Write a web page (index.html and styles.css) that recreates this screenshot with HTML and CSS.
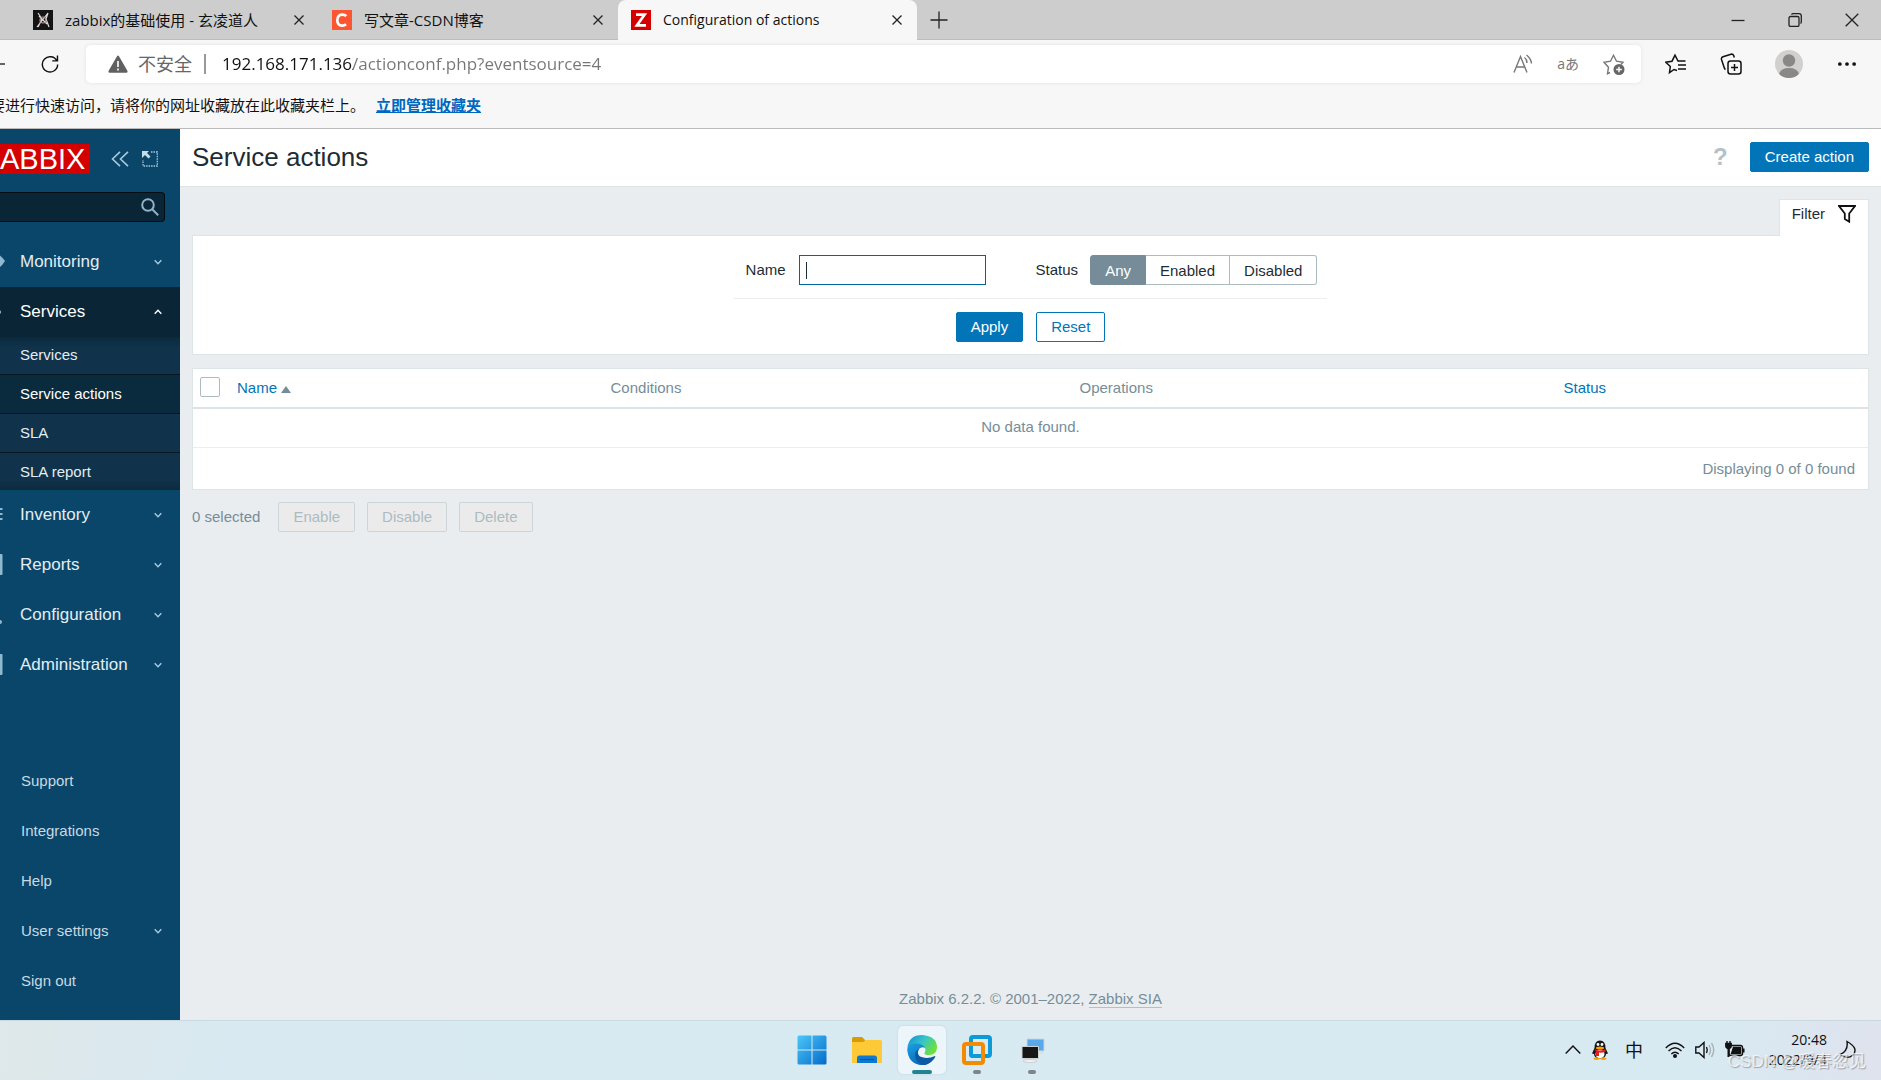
FILE: index.html
```html
<!DOCTYPE html>
<html lang="zh-CN">
<head>
<meta charset="utf-8">
<meta name="viewport" content="width=device-width, initial-scale=1">
<title>Configuration of actions</title>
<link rel="stylesheet" href="styles.css">
</head>
<body>
<div class="screen">
  <header class="browser">
    <div class="tab-strip">
      <div class="tab">
        <svg class="favicon" viewBox="0 0 20 20"><rect width="20" height="20" fill="#141414"/><path d="M5 3l4 6-4 8M15 3l-2 6 3 8M4 17L15 3M6 6l8 8" stroke="#ddd" stroke-width="1.200" fill="none"/><circle cx="10" cy="10" r="3" fill="none" stroke="#b99" stroke-width="1.200"/></svg>
        <span class="tab-title">zabbix的基础使用 - 玄凌道人</span>
        <button class="tab-close" aria-label="Close tab"><svg viewBox="0 0 12 12"><path d="M1.500 1.500l9 9M10.500 1.500l-9 9"/></svg></button>
      </div>
      <div class="tab">
        <svg class="favicon" viewBox="0 0 20 20"><rect width="20" height="20" fill="#fc5531"/><path d="M14.300 6.200Q12.800 4.500 10 4.600Q5.500 5 5.300 10Q5.300 15.500 10 15.600Q12.500 15.700 14 14.300" stroke="#fff" stroke-width="2.600" fill="none"/></svg>
        <span class="tab-title">写文章-CSDN博客</span>
        <button class="tab-close" aria-label="Close tab"><svg viewBox="0 0 12 12"><path d="M1.500 1.500l9 9M10.500 1.500l-9 9"/></svg></button>
      </div>
      <div class="tab tab-active">
        <svg class="favicon" viewBox="0 0 20 20"><rect width="20" height="20" fill="#d40000"/><path d="M5 4.700h8.500L6 15.300h9" stroke="#fff" stroke-width="2.800" fill="none"/></svg>
        <span class="tab-title">Configuration of actions</span>
        <button class="tab-close" aria-label="Close tab"><svg viewBox="0 0 12 12"><path d="M1.500 1.500l9 9M10.500 1.500l-9 9"/></svg></button>
      </div>
      <button class="new-tab" aria-label="New tab"><svg viewBox="0 0 18 18"><path d="M9 .5v17M.5 9h17"/></svg></button>
      <div class="window-controls">
        <button aria-label="Minimize"><svg viewBox="0 0 14 14"><path d="M.5 7.500h13"/></svg></button>
        <button aria-label="Restore"><svg viewBox="0 0 14 14"><rect x="1" y="3.500" width="10" height="10" rx="1.500"/><path d="M3.500 1.500Q4 .7 5 .7h6q2.300 0 2.300 2.300v6q0 1-.8 1.500"/></svg></button>
        <button aria-label="Close"><svg viewBox="0 0 14 14"><path d="M.7.7l12.600 12.600M13.300.7L.7 13.300"/></svg></button>
      </div>
    </div>
    <div class="toolbar">
      <button class="back" aria-label="Back"><svg viewBox="0 0 6 12"><path d="M0 6h5" stroke="#333" stroke-width="1.500"/></svg></button>
      <button class="reload" aria-label="Reload"><svg viewBox="0 0 20 22"><path d="M17.800 8A8.500 8.500 0 1 0 18.500 11.500M18.300 1.500V7.500H12.500" fill="none" stroke="#111" stroke-width="1.600"/></svg></button>
      <div class="address">
        <svg class="warn" viewBox="0 0 20 18"><path d="M10 .5Q10.600.5 11 1.200L19.500 16Q20 17.500 18.500 17.800H1.500Q0 17.500.5 16L9 1.200Q9.400.5 10 .5z" fill="#606060"/><path d="M10 6v6M10 13.500v2" stroke="#fff" stroke-width="1.600"/></svg>
        <label class="insecure" for="url">不安全</label>
        <input class="url" id="url" type="text" value="192.168.171.136/actionconf.php?eventsource=4">
        <div class="address-tools">
          <button aria-label="Read aloud"><svg viewBox="0 0 20 20"><path d="M1 18.500L7.500 2.500 14 18.500M3.500 13h8M11.500 3.500Q14 5.500 14 9M13.500 1Q18 4.500 18.500 9.500"/></svg></button>
          <button class="translate" aria-label="Translate">aあ</button>
          <button aria-label="Add favorite"><svg class="fav-add" viewBox="0 0 22 21"><path d="M7 18.500L4.500 19.700 5.500 13.200 1 8.200 7.500 7.200 10.500 1.300 13.500 7.200 20 8.200 18 10.500"/><circle cx="16" cy="15.500" r="5.500" fill="#666" stroke="none"/><path d="M16 12.700v5.600M13.200 15.500h5.600" stroke="#fff"/></svg></button>
        </div>
      </div>
      <div class="browser-tools">
        <button aria-label="Favorites"><svg viewBox="0 0 22 20"><path d="M12 16.500L9 15.500 4.500 18.700 5.300 12.500.800 8.200 7 7.200 10 1.200 13 7h7.500M13 11h8M13 15h8"/></svg></button>
        <button aria-label="Collections"><svg viewBox="0 0 22 22"><rect x="8" y="8" width="13" height="13" rx="2.500"/><path d="M14.500 11v7M11 14.500h7M5.500 16.500Q4.500 16 4 14L1.500 6.500Q1 4.500 3 3.700L11 1.200Q13 .8 13.700 2.500L14.300 4.500"/></svg></button>
        <button aria-label="Profile"><svg class="avatar" viewBox="0 0 28 28"><circle cx="14" cy="14" r="14" fill="#d2d0ce"/><circle cx="14" cy="10.500" r="6.200" fill="#8a8886"/><path d="M4 23.700Q6 18 14 18T24 23.700Q20 28 14 28T4 23.700z" fill="#8a8886"/></svg></button>
        <button aria-label="More"><svg viewBox="0 0 18 20"><g fill="#111" stroke="none"><circle cx="2.500" cy="10" r="1.700"/><circle cx="9" cy="10" r="1.700"/><circle cx="15.500" cy="10" r="1.700"/></g></svg></button>
      </div>
    </div>
    <div class="favorites"><span>要进行快速访问，请将你的网址收藏放在此收藏夹栏上。</span><a href="#favorites">立即管理收藏夹</a></div>
  </header>

  <div class="app">
    <aside class="sidebar">
      <div class="brand">
        <a class="logo" href="#home">ABBIX</a>
        <button aria-label="Collapse sidebar"><svg viewBox="0 0 18 16"><path d="M9 .8L1.500 8 9 15.200M17 .8L9.500 8 17 15.200" fill="none" stroke="#a9cadb" stroke-width="1.600"/></svg></button>
        <button aria-label="Hide sidebar"><svg viewBox="0 0 16 16"><path d="M9 1h6.300v14H1V9" fill="none" stroke="#a9cadb" stroke-width="1.300" stroke-dasharray="1.500 1"/><path d="M0 0h7L5 2l3.500 3.500-2 2L3 4 0 7z" fill="#c6dde8"/></svg></button>
      </div>
      <form class="search">
        <input type="text" aria-label="Search">
        <button type="button" aria-label="Search"><svg viewBox="0 0 18 18"><circle cx="7" cy="7" r="5.800"/><path d="M11.200 11.200l6 6"/></svg></button>
      </form>
      <nav class="menu">
        <a class="item" href="#monitoring"><svg class="edge" viewBox="0 0 5 22"><path d="M0 4.500q2.500 2 5 5.500-2.500 4-5 6z"/></svg><span>Monitoring</span><svg class="chev" viewBox="0 0 8 8"><path d="M.7 2.200L4 5.700 7.300 2.200"/></svg></a>
        <a class="item open" href="#services"><svg class="edge" viewBox="0 0 5 22"><circle cx="-1" cy="11" r="2"/></svg><span>Services</span><svg class="chev" viewBox="0 0 8 8"><path d="M.7 5.700L4 2.200 7.300 5.700"/></svg></a>
        <div class="submenu">
          <a href="#services-list">Services</a>
          <a class="current" href="#service-actions">Service actions</a>
          <a href="#sla">SLA</a>
          <a href="#sla-report">SLA report</a>
        </div>
        <a class="item" href="#inventory"><svg class="edge" viewBox="0 0 5 22"><path d="M0 4h2.500v2H0zM0 9h2.500v2H0zM0 14h2.500v2H0z"/></svg><span>Inventory</span><svg class="chev" viewBox="0 0 8 8"><path d="M.7 2.200L4 5.700 7.300 2.200"/></svg></a>
        <a class="item" href="#reports"><svg class="edge" viewBox="0 0 5 22"><rect x="-3" width="5.500" height="21" rx="1"/></svg><span>Reports</span><svg class="chev" viewBox="0 0 8 8"><path d="M.7 2.200L4 5.700 7.300 2.200"/></svg></a>
        <a class="item" href="#configuration"><svg class="edge" viewBox="0 0 5 22"><circle cx="0" cy="18" r="2"/></svg><span>Configuration</span><svg class="chev" viewBox="0 0 8 8"><path d="M.7 2.200L4 5.700 7.300 2.200"/></svg></a>
        <a class="item" href="#administration"><svg class="edge" viewBox="0 0 5 22"><rect x="-3" width="5.500" height="21" rx="1"/></svg><span>Administration</span><svg class="chev" viewBox="0 0 8 8"><path d="M.7 2.200L4 5.700 7.300 2.200"/></svg></a>
      </nav>
      <nav class="menu menu-user">
        <a class="item" href="#support"><span>Support</span></a>
        <a class="item" href="#integrations"><span>Integrations</span></a>
        <a class="item" href="#help"><span>Help</span></a>
        <a class="item" href="#user"><span>User settings</span><svg class="chev" viewBox="0 0 8 8"><path d="M.7 2.200L4 5.700 7.300 2.200"/></svg></a>
        <a class="item" href="#signout"><span>Sign out</span></a>
      </nav>
    </aside>

    <div class="page">
      <header class="page-head">
        <h1>Service actions</h1>
        <a class="help" href="#docs">?</a>
        <button class="btn btn-primary">Create action</button>
      </header>
      <main>
        <div class="filter-tabs"><button class="filter-tab">Filter<svg viewBox="0 0 18 18"><path d="M1 1h16L11.200 8.500V16.700L6.800 14V8.500z" fill="none" stroke="#111" stroke-width="1.800"/></svg></button></div>
        <form class="filter">
          <div class="filter-fields">
            <label for="name">Name</label>
            <input class="text" id="name" type="text">
            <fieldset class="status">
              <legend class="sr">Status</legend>
              <span class="status-label" aria-hidden="true">Status</span>
              <div class="segments">
                <input class="sr" type="radio" name="status" id="any" checked><label for="any">Any</label>
                <input class="sr" type="radio" name="status" id="enabled"><label for="enabled">Enabled</label>
                <input class="sr" type="radio" name="status" id="disabled"><label for="disabled">Disabled</label>
              </div>
            </fieldset>
          </div>
          <div class="filter-buttons">
            <button class="btn btn-primary" type="button">Apply</button>
            <button class="btn" type="button">Reset</button>
          </div>
        </form>
        <table class="list">
          <colgroup><col class="c-check"><col class="c-name"><col class="c-cond"><col class="c-oper"><col></colgroup>
          <thead><tr>
            <th class="check"><input type="checkbox" aria-label="Select all"></th>
            <th><a href="#sort-name">Name<span class="arrow"></span></a></th>
            <th>Conditions</th>
            <th>Operations</th>
            <th><a href="#sort-status">Status</a></th>
          </tr></thead>
          <tbody>
            <tr><td class="empty" colspan="5">No data found.</td></tr>
            <tr><td class="stats" colspan="5">Displaying 0 of 0 found</td></tr>
          </tbody>
        </table>
        <div class="bulk">
          <span>0 selected</span>
          <button class="btn" disabled>Enable</button>
          <button class="btn" disabled>Disable</button>
          <button class="btn" disabled>Delete</button>
        </div>
      </main>
      <footer class="page-foot">Zabbix 6.2.2. © 2001–2022, <a href="#zabbix">Zabbix SIA</a></footer>
    </div>
  </div>

  <footer class="taskbar">
    <div class="apps">
      <button aria-label="Start"><svg viewBox="0 0 30 30"><defs><linearGradient id="win" gradientUnits="userSpaceOnUse" x1="0" y1="0" x2="30" y2="30"><stop offset="0" stop-color="#4cc9fb"/><stop offset="1" stop-color="#0369c8"/></linearGradient></defs><path d="M2 .5H14.500V14.500H.5V2Q.5.5 2 .5zM15.500.5H28Q29.500.5 29.500 2V14.500H15.500zM.5 15.500H14.500V29.500H2Q.5 29.500.5 28zM15.500 15.500H29.500V28Q29.500 29.500 28 29.500H15.500z" fill="url(#win)"/></svg></button>
      <button aria-label="File Explorer"><svg viewBox="0 0 30 30"><path d="M0 8V3.500Q0 2 1.500 2H10l3 3v4H0z" fill="#d99a05"/><path d="M0 7H11l3-2H28.500Q30 5 30 6.500V28H0z" fill="#fdc936"/><path d="M5 28V23Q5 20.500 7.500 20.500H22.500Q25 20.500 25 23V28z" fill="#0f78d0"/><path d="M8 24.500H22" stroke="#075399"/></svg></button>
      <button class="active" aria-label="Edge"><svg viewBox="0 0 30 30"><defs><linearGradient id="e1" x1="0" y1="0" x2="1" y2=".5"><stop offset="0" stop-color="#1688d4"/><stop offset=".55" stop-color="#36c5c9"/><stop offset="1" stop-color="#6ce03c"/></linearGradient><linearGradient id="e2" x1="0" y1="0" x2=".6" y2="1"><stop offset="0" stop-color="#1ba1e2"/><stop offset="1" stop-color="#0866b8"/></linearGradient></defs><path d="M.3 13Q2 0 15 0 30 1 30 12.500 29.500 20 22 20 17 20 17.500 18 19.500 15 17.500 12.500 14 9 9 9.500 3 10 .3 13z" fill="url(#e1)"/><path d="M.2 14Q2 8.500 9 8.500 16 8.500 18 13 15 11 12 14 9 19 14 24 19 28 25 25.500 20 31 13 30 1 28 .2 14z" fill="url(#e2)"/><path d="M12 13.500Q9 19 13 21.500 20 24.500 28 21 29 21 27 24 22 30 16 30 8 27 8 20 8.500 15.500 12 13.500z" fill="#0c59a4"/></svg></button>
      <button class="running" aria-label="VMware Workstation"><svg viewBox="0 0 30 30"><rect x="9" y="2" width="19" height="19" rx="2" fill="none" stroke="#0c9ad8" stroke-width="4"/><rect x="2" y="9" width="19" height="19" rx="2" fill="none" stroke="#f38b00" stroke-width="4"/><path d="M9 12V19Q9 21 11 21H18" fill="none" stroke="#0c9ad8" stroke-width="4"/></svg></button>
      <button class="running" aria-label="Remote session"><svg viewBox="0 0 30 30"><path d="M10 4H27V16H10z" fill="#58a8ec" stroke="#ccd5da"/><path d="M20 18h6" stroke="#ddd" stroke-width="2"/><path d="M5 11.500H21.500V23.500H5z" fill="#161616" stroke="#cdd2d4"/><ellipse cx="13" cy="26" rx="7" ry="1.500" fill="#f1f1f1" stroke="#b5b5b5" stroke-width=".5"/></svg></button>
    </div>
    <div class="tray">
      <svg class="t16" viewBox="0 0 16 16"><path d="M.7 11.500L8 4l7.300 7.500"/></svg>
      <svg class="t18" viewBox="0 0 18 20"><g stroke="none"><path d="M3.500 8Q3.500.5 9 .5T14.500 8L17 13.500 15 14Q15 18 9 18.500 3 18 3 14L1 13.500z" fill="#161616"/><ellipse cx="9" cy="14" rx="4.500" ry="4.300" fill="#fff"/><path d="M3.500 9Q9 12 14.500 9V12Q10 13 8 12.500V16H5V12z" fill="#e51d1d"/><ellipse cx="9" cy="8" rx="4" ry="1.500" fill="#f8a300"/><circle cx="7" cy="4.500" r="1.400" fill="#fff"/><circle cx="11" cy="4.500" r="1.400" fill="#fff"/><ellipse cx="5.500" cy="18.700" rx="3" ry="1.200" fill="#f8a300"/><ellipse cx="12.500" cy="18.700" rx="3" ry="1.200" fill="#f8a300"/></g></svg>
      <span class="ime">中</span>
      <svg class="t20" viewBox="0 0 20 18"><path d="M.8 7Q10-2.500 19.200 7M3.500 10Q10 3.500 16.500 10M6.300 13Q10 9.500 13.700 13"/><circle cx="10" cy="15" r="2" fill="#111" stroke="none"/></svg>
      <svg class="t20" viewBox="0 0 20 18"><path d="M.8 6H4L9 1.500V16.500L4 12H.8z"/><path d="M11.500 6Q13 9 11.500 12"/><path d="M14 4Q17 9 14 14M16.500 2Q21 9 16.500 16" stroke="#a8b4b9"/></svg>
      <svg class="t20" viewBox="0 0 20 18"><rect x="4" y="4.500" width="13.500" height="10" rx="2"/><path d="M8.500 6.500H15.500V12.500H6.500z" fill="#111"/><path d="M18.500 7.500V11.500M3.500 7V16" stroke-width="2"/><path d="M.8 2.500H6.200V5Q6 7.500 3.500 7.500T.8 5zM2 0V3M5 0V3" fill="#111"/></svg>
      <div class="clock"><time>20:48</time><time>2022/9/4</time></div>
      <svg class="t18" viewBox="0 0 18 20"><path d="M8 1.500Q9.500 10.500 1.500 14.500 8 20 14 15 20 8 8 1.500z"/></svg>
    </div>
    <span class="watermark">CSDN @暖春忽见</span>
  </footer>
</div>
</body>
</html>
```
FILE: styles.css
```css
* { box-sizing: border-box; }

body {
  margin: 0;
  font: 15px/18px "Liberation Sans", "Noto Sans CJK SC", sans-serif;
  color: #1f2c33;
}

button { font: inherit; color: inherit; border: 0; padding: 0; background: none; }
a { color: inherit; text-decoration: none; }
svg { display: block; flex: none; overflow: hidden; }

.sr { position: absolute; width: 1px; height: 1px; margin: 0; padding: 0; opacity: 0; overflow: hidden; }

.screen { display: flex; flex-direction: column; min-height: 100vh; overflow: hidden; }

/* Browser chrome */
.browser { background: #f7f7f7; border-bottom: 1px solid #bbb; font-family: "Open Sans", "Noto Sans CJK SC", sans-serif; color: #111; }
.tab-strip { display: flex; height: 40px; padding-left: 20px; background: #cdcdcd; box-shadow: inset 0 -1px #bdbdbd; }
.tab { display: flex; align-items: center; gap: 12px; width: 299px; padding: 0 14px 0 13px; font-size: 15px; }
.tab-active { background: #f7f7f7; border-radius: 8px 8px 0 0; font-size: 14px; }
.favicon { width: 20px; height: 20px; }
.tab-title { flex: 1; white-space: nowrap; overflow: hidden; }
.tab-close svg { width: 12px; height: 12px; }
.tab-strip button svg { fill: none; stroke: #222; stroke-width: 1.3; }
.new-tab { margin-left: 13px; }
.new-tab svg { width: 18px; height: 18px; }
.window-controls { display: flex; gap: 43px; margin-left: auto; padding-right: 22px; }
.window-controls svg { width: 14px; height: 14px; }

.toolbar { display: flex; align-items: center; height: 48px; }
.back svg { width: 6px; height: 12px; }
.reload { margin: 0 27px 0 35px; }
.reload svg { width: 18px; height: 22px; }
.address { display: flex; align-items: center; flex: 1; height: 38px; padding: 0 16px 0 22px; background: #fff; border-radius: 5px; box-shadow: 0 0 4px #e3e3e3; }
.warn { width: 20px; height: 18px; }
.insecure { margin: 0 16px 0 10px; padding-right: 12px; border-right: 2px solid #999; font-size: 18px; line-height: 20px; color: #666; }
.url {
  flex: 1; min-width: 0; height: 30px; padding: 0 0 2px; border: 0; outline: 0;
  font: 17px "Open Sans", sans-serif;
  color: transparent;
  background: linear-gradient(to right, #111 131px, #767676 131px);
  -webkit-background-clip: text; background-clip: text;
}
.address-tools { display: flex; align-items: center; gap: 24px; }
.address-tools svg { width: 20px; height: 20px; fill: none; stroke: #777; stroke-width: 1.4; }
.address-tools .fav-add { width: 22px; height: 21px; }
.translate { font-size: 14px; color: #777; }
.browser-tools { display: flex; align-items: center; gap: 33px; padding: 0 23px 0 24px; }
.browser-tools svg { width: 22px; height: 22px; fill: none; stroke: #111; stroke-width: 1.5; }
.browser-tools .avatar { width: 28px; height: 28px; stroke: none; }

.favorites { display: flex; align-items: center; gap: 11px; height: 40px; margin-left: -10px; padding-bottom: 6px; white-space: nowrap; }
.favorites a { color: #0067c0; font-weight: 700; text-decoration: underline; }

/* Application */
.app { display: flex; flex: 1; }

.sidebar { display: flex; flex-direction: column; width: 180px; padding-bottom: 14px; background: #0a466a; color: #e4edf2; }
.brand { display: flex; align-items: center; height: 60px; }
.logo { width: 90px; height: 30px; margin-right: 21px; background: #d40000; color: #fff; font-size: 29px; line-height: 30px; }
.brand button + button { margin-left: 13px; }
.brand svg { width: 18px; height: 16px; }
.brand button + button svg { width: 16px; }
.search { display: flex; align-items: center; height: 30px; margin: 3px 15px 15px 0; padding-right: 5px; background: #0a2636; border: 1px solid #020d14; border-left: 0; border-radius: 0 4px 4px 0; }
.search input { flex: 1; min-width: 0; border: 0; outline: 0; background: none; color: #fff; }
.search svg { width: 18px; height: 18px; fill: none; stroke: #8fb3c7; stroke-width: 2; }

.item { display: flex; align-items: center; height: 50px; padding-right: 18px; font-size: 17px; }
.item span { flex: 1; white-space: nowrap; }
.item.open { background: #0a2636; color: #fff; }
.edge { width: 5px; height: 22px; margin-right: 15px; fill: #8fb9d0; }
.chev { width: 8px; height: 8px; fill: none; stroke: #a9cadb; stroke-width: 1.4; }
.open .chev { stroke: #fff; }
.submenu { background: linear-gradient(#0b2a3d, #10324a 10px, #10324a calc(100% - 10px), #0b2a3d); }
.submenu a { display: block; padding: 10px 20px; border-bottom: 1px solid #061722; color: #e4edf2; }
.submenu a:first-child { padding-top: 9px; }
.submenu a:last-child { padding-bottom: 9px; border-bottom: 0; }
.submenu .current { background: #0a2a3e; color: #fff; }
.menu-user { margin-top: auto; }
.menu-user .item { padding-left: 21px; font-size: 15px; color: #c8d9e2; }

.page { display: flex; flex-direction: column; flex: 1; min-width: 0; background: #e9edf0; }
.page-head { display: flex; align-items: center; height: 58px; padding: 0 12px 2px; background: #fff; border-bottom: 1px solid #dfe4e7; }
h1 { flex: 1; margin: 0; font-size: 26px; line-height: 30px; font-weight: 400; }
.help { margin-right: 22px; color: #b3c2ca; font-size: 24px; font-weight: 700; }

.btn { height: 30px; padding: 0 14px; border: 1px solid #0275b8; border-radius: 2px; background: #fff; color: #0275b8; }
.btn-primary { background: #0275b8; color: #fff; }
.btn:disabled { background: #ebebeb; border-color: #ccd5d9; color: #acbbc2; }

main { padding: 12px 12px 0; }
.filter-tabs { display: flex; justify-content: flex-end; }
.filter-tab { display: flex; align-items: center; gap: 13px; height: 37px; margin-bottom: -1px; padding: 0 12px 8px; border: 1px solid #dfe4e7; border-bottom: 0; background: #fff; z-index: 1; }
.filter-tab svg { width: 18px; height: 18px; }

.filter { display: flex; flex-direction: column; align-items: center; height: 120px; padding-top: 19px; background: #fff; border: 1px solid #dfe4e7; }
.filter-fields { display: flex; align-items: center; padding: 0 10px 13px 12px; border-bottom: 1px solid #ebeef0; }
.text {
  width: 187px; height: 30px; margin: 0 50px 0 13px; padding: 0 7px; border: 1px solid #00659c; outline: 0;
  background: #fff linear-gradient(#1f2c33, #1f2c33) 6px 6px / 1px 17px no-repeat;
}
.status { display: flex; align-items: center; gap: 12px; margin: 0; padding: 0; border: 0; }
.segments { display: flex; position: relative; }
.segments label { height: 30px; padding: 0 14px; border: 1px solid #acbbc2; border-left: 0; line-height: 30px; }
.segments label:first-of-type { border: 1px solid #768d99; border-radius: 3px 0 0 3px; }
.segments label:last-of-type { border-radius: 0 3px 3px 0; }
.segments :checked + label { background: #768d99; color: #fff; }
.filter-buttons { display: flex; gap: 13px; padding-top: 13px; }

.list { width: 100%; margin-top: 13px; table-layout: fixed; border-collapse: separate; border-spacing: 0; background: #fff; border: 1px solid #dfe4e7; color: #768d99; }
.c-check { width: 38px; }
.c-name { width: 22.3%; }
.c-cond { width: 28%; }
.c-oper { width: 28.9%; }
.list th { height: 40px; padding: 0 6px; border-bottom: 2px solid #dce2e5; text-align: left; font-weight: 400; }
.list th a { color: #0275b8; }
.arrow { display: inline-block; margin-left: 4px; border: 5px solid transparent; border-top: 0; border-bottom: 7px solid #768d99; }
.list .check { padding: 0 0 0 7px; }
.check input { display: block; width: 20px; height: 20px; margin: 0 0 2px; appearance: none; border: 1px solid #acbbc2; border-radius: 2px; background: #fff; }
.list td { height: 39px; padding: 0 13px 2px; }
.list .empty { text-align: center; border-bottom: 1px solid #ebeef0; }
.list .stats { height: 41px; padding-bottom: 0; text-align: right; }

.bulk { display: flex; align-items: center; gap: 12px; margin-top: 12px; color: #768d99; }
.bulk span { margin-right: 6px; }
.page-foot { margin-top: auto; padding-bottom: 12px; text-align: center; color: #768d99; }
.page-foot a { border-bottom: 1px solid #b4c0c6; }

/* Taskbar */
.taskbar { display: grid; grid-template-columns: 1fr auto 1fr; align-items: center; position: relative; height: 60px; background: linear-gradient(100deg, #dfe8ea, #d8e9f1 12%, #d7eaf2 90%, #dfe3ee); box-shadow: inset 0 1px #c9d9e0; font-family: "Open Sans", "Noto Sans CJK SC", sans-serif; }
.apps { grid-column: 2; display: flex; gap: 7px; padding-right: 38px; }
.apps button { position: relative; display: grid; place-items: center; width: 48px; height: 48px; border-radius: 5px; }
.apps .active { background: #ecf5fa; box-shadow: 0 0 2px #b9ccd5; }
.apps svg { width: 30px; height: 30px; }
.apps .active::after, .apps .running::after { content: ""; position: absolute; bottom: 0; width: 8px; height: 4px; border-radius: 2px; background: #7d8589; }
.apps .active::after { width: 20px; background: #208592; }
.tray { display: flex; align-items: center; justify-content: flex-end; gap: 10px; padding-right: 24px; color: #111; }
.tray svg { fill: none; stroke: #111; stroke-width: 1.4; }
.t16 { width: 16px; height: 16px; }
.t18 { width: 18px; height: 20px; }
.t20 { width: 20px; height: 18px; }
.ime { width: 26px; margin: 0 8px 0 2px; text-align: center; font-size: 18px; }
.clock { display: flex; flex-direction: column; align-items: flex-end; width: 74px; padding-right: 2px; font-size: 14px; line-height: 20px; }
.watermark { position: absolute; right: 15px; bottom: 7px; font: 17px/22px "Liberation Sans", "Noto Sans CJK SC", sans-serif; color: #ffffffb0; text-shadow: 1px 1px 1px #7779; }
```
